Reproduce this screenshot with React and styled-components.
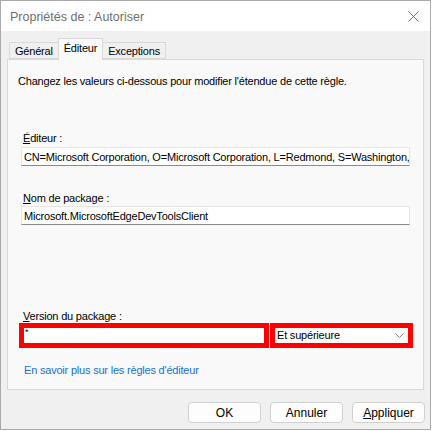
import React from "react";
import styled, { createGlobalStyle } from "styled-components";

const Global = createGlobalStyle`
  html, body { margin: 0; padding: 0; background: #ffffff; }
  * { box-sizing: border-box; }
`;

const Window = styled.div`
  width: 431px;
  height: 430px;
  border: 1px solid #a9a9a9;
  background: #f0f0f0;
  display: flex;
  flex-direction: column;
  font-family: "Liberation Sans", Arial, sans-serif;
  font-size: 11px;
  letter-spacing: -0.2px;
  color: #000;
`;

const TitleBar = styled.div`
  height: 30px;
  background: #ffffff;
  display: flex;
  align-items: center;
  justify-content: space-between;
  padding: 1px 10px 0 9px;
`;

const Title = styled.span`
  font-size: 12.5px;
  letter-spacing: 0;
  color: #6f6f6f;
`;

const Close = styled.svg`
  width: 11px;
  height: 11px;
  margin-right: 1px;
`;

const Body = styled.div`
  flex: 1;
  display: flex;
  flex-direction: column;
  padding: 7px 5px 0 6px;
`;

const TabRow = styled.div`
  display: flex;
  align-items: flex-end;
  padding-left: 2px;
  height: 21px;
  position: relative;
  z-index: 1;
`;

const Tab = styled.div`
  height: ${(p) => (p.$active ? "22px" : "17px")};
  margin-bottom: ${(p) => (p.$active ? "-1px" : "0")};
  padding: ${(p) => (p.$active ? "3px 5px 0" : "2px 5px 0")};
  background: ${(p) => (p.$active ? "#f9f9f9" : "#f0f0f0")};
  border: 1px solid #d9d9d9;
  border-bottom: ${(p) => (p.$active ? "none" : "1px solid #d9d9d9")};
  margin-left: ${(p) => (p.$first ? "0" : "-1px")};
  line-height: 13px;
  white-space: nowrap;
`;

const Panel = styled.div`
  height: 331px;
  margin-right: 1px;
  background: #f9f9f9;
  border: 1px solid #d9d9d9;
  display: flex;
  flex-direction: column;
  padding: 15px 0 0 10px;
`;

const Intro = styled.div`
  line-height: 13px;
  margin-bottom: 44px;
`;

const Label = styled.div`
  line-height: 13px;
  padding-left: 5px;
  margin-bottom: ${(p) => p.$mb}px;
`;

const U = styled.span`
  text-decoration: underline;
  text-underline-offset: 1px;
`;

const Field = styled.div`
  width: 389px;
  height: 19px;
  margin-left: 3px;
  background: #ffffff;
  border: 1px solid #e6e6e6;
  border-bottom: 1px solid #8a8a8a;
  padding: 2px 2px 0 2px;
  line-height: 14px;
  white-space: nowrap;
  overflow: hidden;
  margin-bottom: ${(p) => p.$mb || 0}px;
`;

const VersionRow = styled.div`
  display: flex;
  gap: 1px;
  margin-left: 1px;
  margin-bottom: 16px;
`;

const RedBox = styled.div`
  width: ${(p) => p.$w}px;
  height: 25px;
  border: 5px solid #ff0000;
  background: #ffffff;
  display: flex;
  align-items: center;
  justify-content: space-between;
  padding: 0 4px 0 ${(p) => p.$pl || 1}px;
  line-height: 13px;
`;

const Star = styled.span`
  align-self: flex-start;
  font-size: 9px;
  line-height: 9px;
`;

const Chevron = styled.svg`
  width: 9px;
  height: 5px;
`;

const Link = styled.a`
  color: #1a6fd0;
  text-decoration: none;
  padding-left: 6px;
  line-height: 13px;
  cursor: pointer;
`;

const ButtonRow = styled.div`
  display: flex;
  justify-content: flex-end;
  gap: 9px;
  margin-top: 12px;
`;

const Button = styled.button`
  width: 73px;
  height: 21px;
  background: #fdfdfd;
  border: 1px solid #d0d0d0;
  border-radius: 4px;
  font-family: "Liberation Sans", Arial, sans-serif;
  font-size: 12px;
  color: #000;
  padding: 0;
`;

export default function App() {
  return (
    <>
      <Global />
      <Window>
        <TitleBar>
          <Title>Propriétés de : Autoriser</Title>
          <Close viewBox="0 0 11 11">
            <path d="M0.5 0.5 L10.5 10.5 M10.5 0.5 L0.5 10.5" stroke="#707070" strokeWidth="1" fill="none" />
          </Close>
        </TitleBar>
        <Body>
          <TabRow>
            <Tab $first>Général</Tab>
            <Tab $active>Éditeur</Tab>
            <Tab>Exceptions</Tab>
          </TabRow>
          <Panel>
            <Intro>Changez les valeurs ci-dessous pour modifier l'étendue de cette règle.</Intro>
            <Label $mb={2}><U>É</U>diteur :</Label>
            <Field $mb={26}>CN=Microsoft Corporation, O=Microsoft Corporation, L=Redmond, S=Washington,</Field>
            <Label $mb={1}><U>N</U>om de package :</Label>
            <Field $mb={85}>Microsoft.MicrosoftEdgeDevToolsClient</Field>
            <Label $mb={0}><U>V</U>ersion du package :</Label>
            <VersionRow>
              <RedBox $w={250} $pl={1}><Star>*</Star></RedBox>
              <RedBox $w={143} $pl={2}>
                <span>Et supérieure</span>
                <Chevron viewBox="0 0 9 5">
                  <path d="M0.5 0.5 L4.5 4.5 L8.5 0.5" stroke="#8a8a8a" strokeWidth="1" fill="none" />
                </Chevron>
              </RedBox>
            </VersionRow>
            <Link>En savoir plus sur les règles d'éditeur</Link>
          </Panel>
          <ButtonRow>
            <Button>OK</Button>
            <Button>Annuler</Button>
            <Button><U>A</U>ppliquer</Button>
          </ButtonRow>
        </Body>
      </Window>
    </>
  );
}
